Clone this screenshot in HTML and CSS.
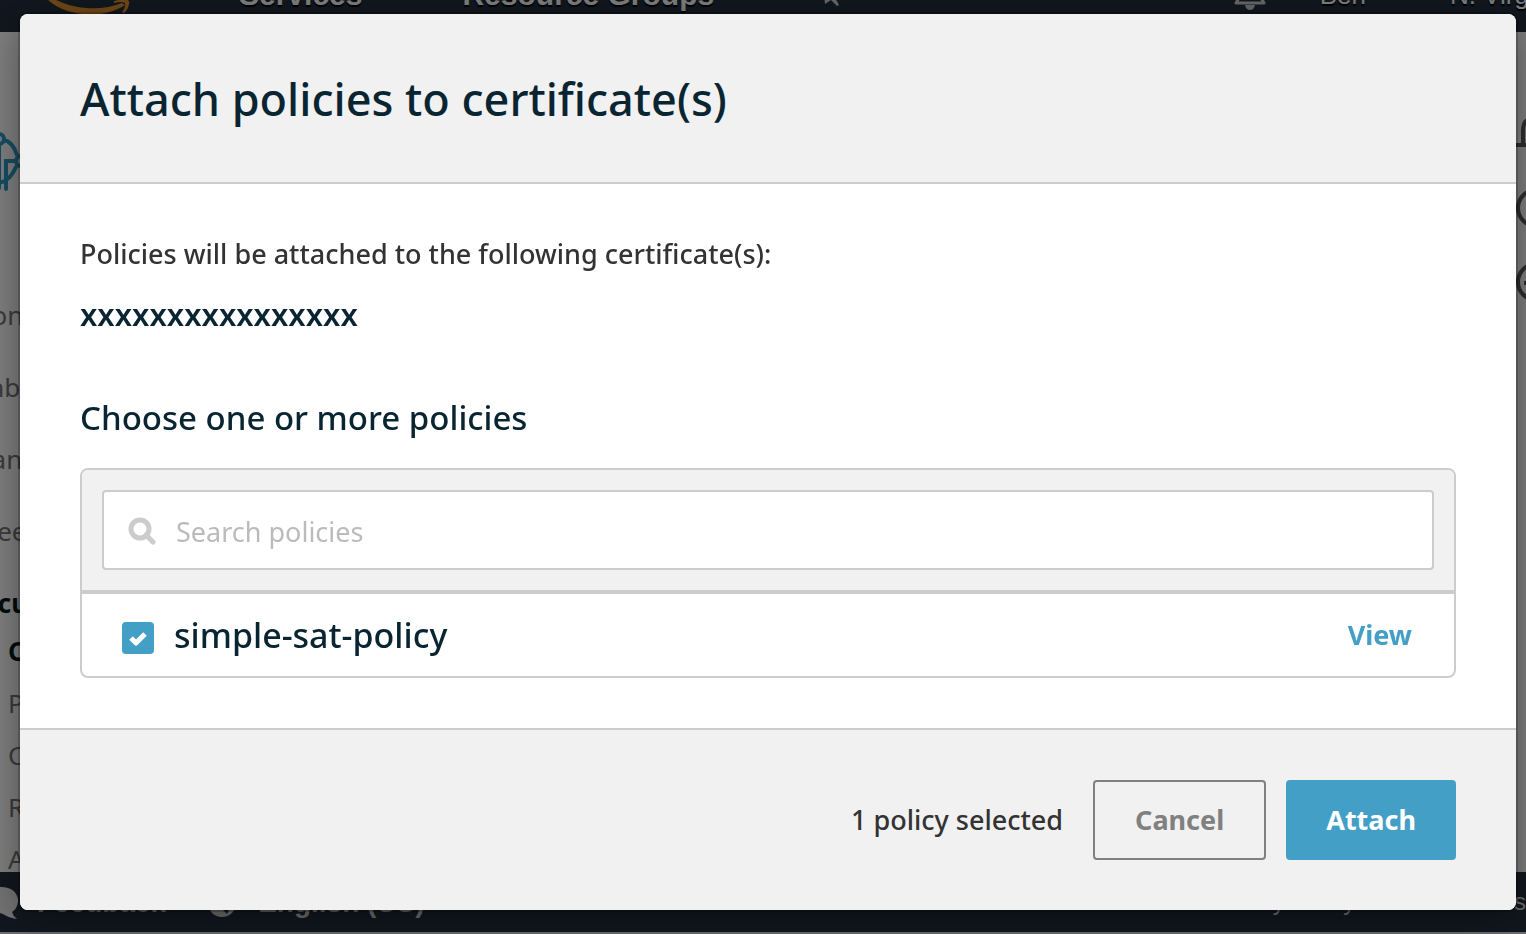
FILE: index.html
```html
<!DOCTYPE html>
<html lang="en">
<head>
<meta charset="utf-8">
<meta name="viewport" content="width=device-width, initial-scale=1">
<title>Attach policies to certificate(s)</title>
<link rel="stylesheet" href="styles.css">
</head>
<body>
<div class="console" inert>
  <header class="topbar">
    <svg class="smile" width="84" height="40" viewBox="0 0 84 40" aria-hidden="true"><path d="M0 24 C20 43 58 44 78 30 L75 28 C55 36 26 36 2 21Z M67 26 C75 24 84 23 82 29 Q81 35 77 38 L75 38 Q79 31 78 28 Q74 26 67 28Z" fill="#e2902e"/></svg>
    <span class="nav-services">Services</span>
    <span class="nav-groups">Resource Groups</span>
    <svg class="pin" width="24" height="30" viewBox="0 0 24 30" aria-hidden="true"><path d="M4 18 L5 28 L11 24 L17 30 L19 29 L14 20 L22 16Z" fill="#d0d0d0"/></svg>
    <span class="nav-spacer"></span>
    <svg class="bell" width="32" height="34" viewBox="0 0 32 34" aria-hidden="true"><path d="M5 22 L2 27 H30 L27 22" fill="none" stroke="#d0d0d0" stroke-width="3" stroke-linejoin="round"/><path d="M11 29 H21 Q20 34 16 34 Q12 34 11 29Z" fill="#d0d0d0"/></svg>
    <span class="nav-user">Ben</span>
    <span class="nav-region">N. Virginia</span>
  </header>
  <div class="workspace">
    <nav class="sidebar">
      <svg class="iot" width="64" height="64" viewBox="0 0 64 64" aria-hidden="true"><g fill="none" stroke="#2f9bc4" stroke-width="4" stroke-linecap="round"><circle cx="31" cy="9" r="5"/><path d="M36 10 Q45 12 49 25 M48 37 Q42 51 31 53 M31 14 V58 M38 59 V31 H47"/><circle cx="53" cy="31" r="5"/></g></svg>
      <ul class="menu">
        <li>Monitor</li><li>Onboard</li><li>Manage</li><li>Greengrass</li><li class="current">Secure</li>
      </ul>
      <ul class="submenu">
        <li class="current">Certificates</li><li>Policies</li><li>CAs</li><li>Role Aliases</li><li>Authorizers</li>
      </ul>
    </nav>
    <aside class="tools">
      <svg width="10" height="240" viewBox="0 0 10 240" aria-hidden="true"><g fill="none" stroke="#5b5b5b" stroke-width="4"><path d="M0 65 H10 M7 65 V50 Q7 43 11 40"/><circle cx="20" cy="128" r="18"/><circle cx="20" cy="202" r="18"/></g><path d="M8 201h2v4h-2z" fill="#5b5b5b"/></svg>
    </aside>
  </div>
  <footer class="bottombar">
    <svg class="bubble" width="20" height="34" viewBox="0 0 20 34" aria-hidden="true"><path d="M0 2 C13 1 19 10 18 17 Q17 24 12 27 Q13 31 17 34 Q9 33 3 29 L0 28Z" fill="#e8e8e8"/></svg>
    <span class="feedback">Feedback</span>
    <svg class="globe" width="30" height="30" viewBox="0 0 30 30" aria-hidden="true"><circle cx="15" cy="15" r="14" fill="#d8d8d8"/><path d="M16 22 L23 20 L20 26Z" fill="#232f3e"/></svg>
    <span>English (US)</span>
    <span class="nav-spacer"></span>
    <span class="legal privacy">Privacy Policy</span>
    <span class="legal terms">Terms of Use</span>
  </footer>
</div>
<div class="backdrop">
  <section class="modal" role="dialog" aria-modal="true" aria-labelledby="dialog-title">
    <header class="modal-header"><h1 id="dialog-title">Attach policies to certificate(s)</h1></header>
    <div class="modal-body">
      <p class="intro">Policies will be attached to the following certificate(s):</p>
      <p class="certificate">xxxxxxxxxxxxxxxx</p>
      <h2>Choose one or more policies</h2>
      <div class="picker">
        <div class="picker-search">
          <label class="search">
            <svg width="28" height="28" viewBox="0 0 28 28" aria-hidden="true"><circle cx="12" cy="12" r="9" fill="none" stroke="#ccc" stroke-width="5"/><path d="M18 18 L25 25" stroke="#ccc" stroke-width="5" stroke-linecap="round"/></svg>
            <input type="search" placeholder="Search policies" aria-label="Search policies">
          </label>
        </div>
        <div class="policy">
          <span class="tick">
            <input type="checkbox" id="policy-1" checked>
            <svg width="32" height="32" viewBox="0 0 32 32" aria-hidden="true"><path d="M9 16 L14 21 L23 12" fill="none" stroke="#fff" stroke-width="5" stroke-linejoin="round"/></svg>
          </span>
          <label class="policy-name" for="policy-1">simple-sat-policy</label>
          <a class="view" href="#policy-1">View</a>
        </div>
      </div>
    </div>
    <footer class="modal-footer">
      <span class="count">1 policy selected</span>
      <button class="button cancel" type="button">Cancel</button>
      <button class="button attach" type="button">Attach</button>
    </footer>
  </section>
</div>
</body>
</html>
```
FILE: styles.css
```css
* { box-sizing: border-box; }
html, body { height: 100%; }
body {
  margin: 0;
  overflow: hidden;
  font-family: "Noto Sans", "Open Sans", sans-serif;
  font-size: 27px;
  line-height: 40px;
  color: #333;
}
h1, h2, p, ul { margin: 0; padding: 0; }
h1, h2, p { font-weight: 500; }
ul { list-style: none; }

.console {
  height: 100vh;
  display: flex;
  flex-direction: column;
  background: #fff;
}
.topbar, .bottombar {
  display: flex;
  flex: none;
  background: #232f3e;
  color: #fff;
  font-family: "Liberation Sans", Arial, sans-serif;
  font-weight: 700;
  white-space: nowrap;
  overflow: hidden;
}
.topbar {
  height: 32px;
  align-items: flex-end;
  padding: 0 0 22px 47px;
  font-size: 30px;
  line-height: 30px;
  text-shadow: 0 2px 1px #000;
}
.topbar > * { flex: none; }
.topbar .nav-spacer, .bottombar .nav-spacer { flex: 1; }
.nav-services { margin-left: 108px; }
.nav-groups { margin-left: 100px; }
.pin { margin-left: 106px; margin-bottom: 4px; }
.smile { margin-bottom: -5px; }
.nav-user, .nav-region { font-size: 26px; font-weight: 400; }
.nav-user { margin-left: 54px; }
.nav-region { width: 76px; margin-left: 84px; }

.workspace {
  flex: 1;
  min-height: 0;
  display: flex;
  justify-content: space-between;
}
.sidebar {
  margin-left: -32px;
  padding-top: 98px;
  font-size: 26px;
  color: #777;
}
.iot { display: block; }
.menu { padding-top: 85px; }
.menu li { line-height: 72px; }
.menu .current, .submenu .current { color: #001a22; font-weight: 700; }
.submenu { padding-left: 40px; margin-top: -14px; }
.submenu li { line-height: 52px; }
.tools { width: 10px; padding-top: 48px; overflow: hidden; }
.bottombar {
  height: 62px;
  align-items: flex-start;
  padding-top: 13px;
  border-bottom: 2px solid #ddd;
  font-size: 28px;
  line-height: 36px;
  color: #d8d8d8;
}
.feedback { margin-left: 17px; }
.globe { margin: 3px 21px 0 41px; }
.legal { font-size: 24px; line-height: 34px; font-weight: 400; }
.privacy { width: 192px; }
.terms { width: 128px; }

.backdrop {
  position: fixed;
  inset: 0;
  display: flex;
  padding: 14px 10px 24px 20px;
  background: rgba(0, 0, 0, .5);
}
.modal {
  flex: 1;
  min-width: 0;
  display: flex;
  flex-direction: column;
  overflow: hidden;
  background: #fff;
  border-radius: 8px;
  box-shadow: 0 0 0 2px rgba(0, 0, 0, .2), 0 8px 40px rgba(0, 0, 0, .4);
}
.modal-header {
  padding: 50px 60px 48px;
  background: #f1f1f1;
  border-bottom: 2px solid #ccc;
}
h1 { font-size: 45px; line-height: 70px; color: #0a2532; }
.modal-body { flex: 1; padding: 50px 60px; }
.certificate {
  margin: 20px 0 60px;
  font-size: 31px;
  font-weight: 600;
  color: #0a2532;
}
h2 {
  margin-bottom: 26px;
  font-size: 33px;
  line-height: 48px;
  color: #0a2532;
}
.picker { border: 2px solid #ccc; border-radius: 8px; overflow: hidden; }
.picker-search { padding: 20px; background: #f1f1f1; border-bottom: 4px solid #ccc; }
.search {
  display: flex;
  align-items: center;
  gap: 20px;
  height: 80px;
  padding: 2px 24px 0;
  background: #fff;
  border: 2px solid #ccc;
  border-radius: 4px;
}
.search input {
  flex: 1;
  min-width: 0;
  padding: 2px 0 0;
  border: 0;
  outline: 0;
  background: transparent;
  font: inherit;
  color: #333;
}
.search input::placeholder { color: #bbb; opacity: 1; }
.policy { display: flex; align-items: center; height: 82px; padding: 0 42px 0 40px; }
.tick { display: grid; margin-top: 6px; }
.tick > * { grid-area: 1 / 1; }
.tick svg { pointer-events: none; }
.tick input {
  appearance: none;
  width: 32px;
  height: 32px;
  margin: 0;
  border-radius: 4px;
  background: #ccc;
}
.tick input:checked { background: #439fc5; }
.policy-name {
  flex: 1;
  margin-left: 20px;
  font-size: 34px;
  font-weight: 500;
  color: #0a2532;
}
.view { color: #439fc5; font-weight: 700; text-decoration: none; }
.modal-footer {
  display: flex;
  align-items: center;
  justify-content: flex-end;
  gap: 20px;
  padding: 50px 60px;
  background: #f1f1f1;
  border-top: 2px solid #ccc;
}
.count { margin-right: 10px; font-weight: 500; }
.button {
  height: 80px;
  padding: 0 40px;
  border: 2px solid #808080;
  border-radius: 4px;
  background: transparent;
  font: inherit;
  font-weight: 700;
  color: #808080;
}
.attach { padding: 0 38px; border-color: #439fc5; background: #439fc5; color: #fff; }
```
